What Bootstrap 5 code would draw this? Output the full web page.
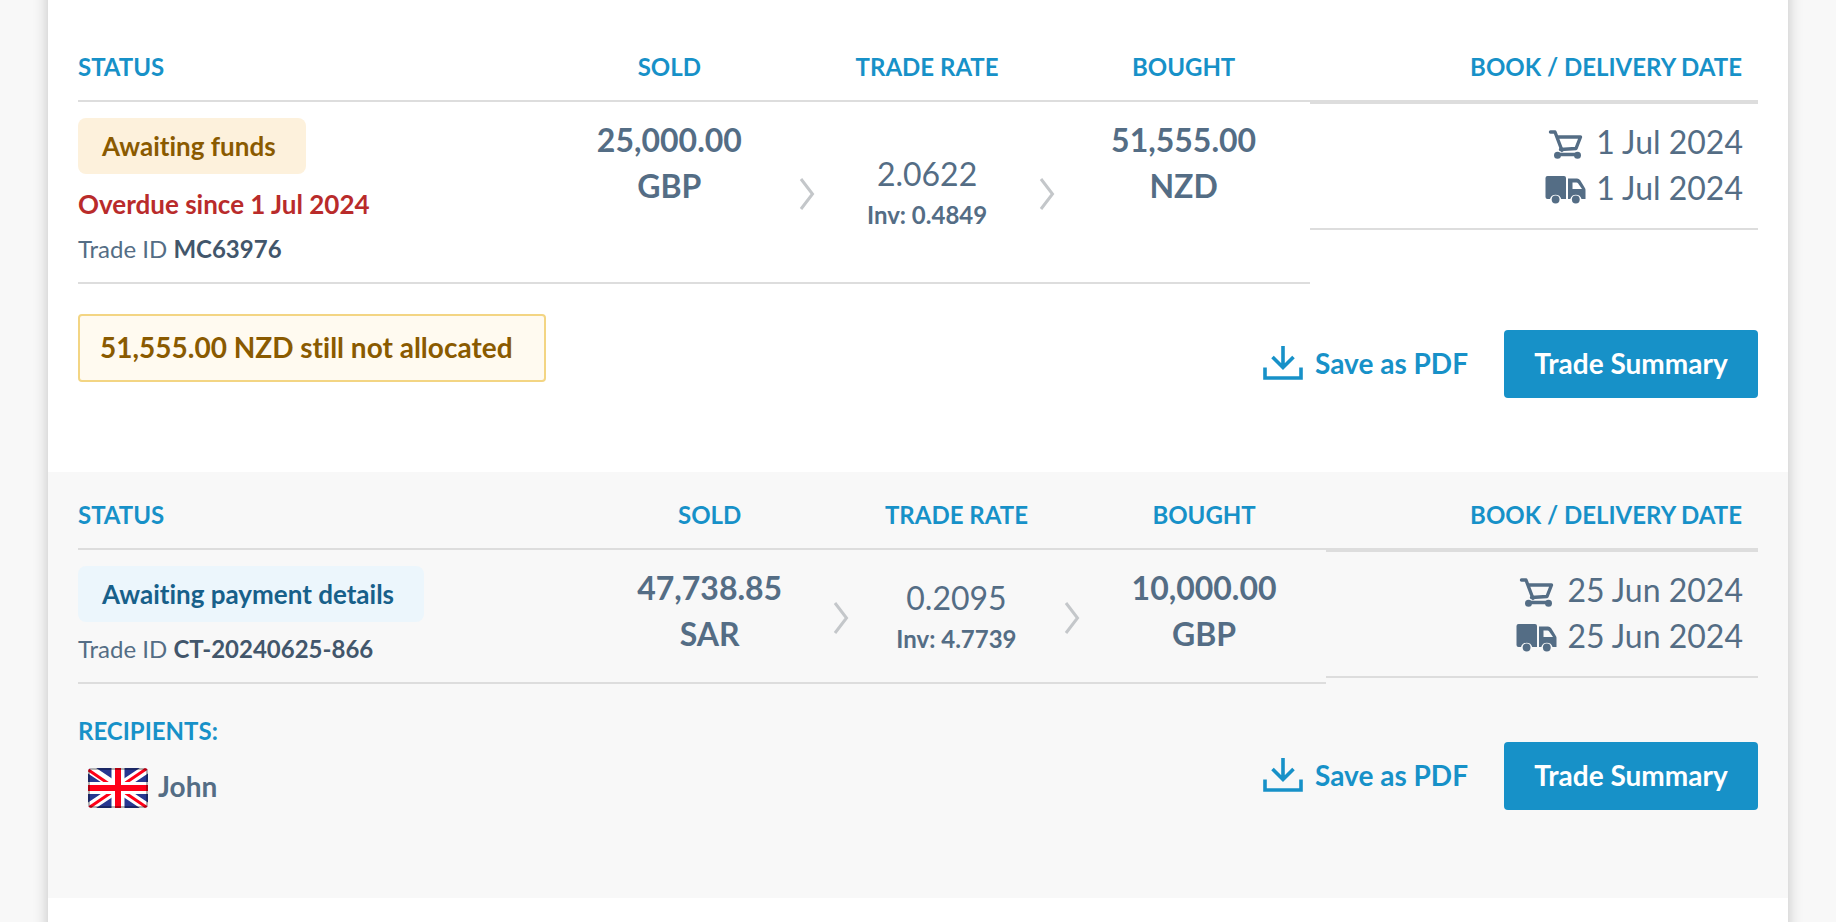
<!DOCTYPE html>
<html lang="en">
<head>
<meta charset="utf-8">
<meta name="viewport" content="width=device-width, initial-scale=1">
<title>Trades</title>
<link href="https://cdn.jsdelivr.net/npm/bootstrap@5.3.0/dist/css/bootstrap.min.css" rel="stylesheet">
<style>
  :root { --brand: #1791c8; --slate: #546d85; --rule: #ddd; }
  body { font-family: Lato, "Liberation Sans", sans-serif; font-size: 28px; line-height: 36px; font-variant-ligatures: none; color: var(--slate); background: #f8f8f8; }
  .sheet { margin: -24px 48px; padding: 24px 0 48px; background: #fff; box-shadow: 0 0 14px rgba(0, 0, 0, .22); }
  .trade { padding: 24px 30px 88px; }
  .trade-first { padding-top: 48px; padding-bottom: 74px; }
  .trade-alt { background: #f8f8f8; }
  .trade-table { width: 100%; table-layout: fixed; border-collapse: separate; border-spacing: 0; }
  .trade-table th { padding: 1px 0 15px; border-bottom: 2px solid var(--rule); font-size: 24px; font-weight: 700; color: var(--brand); text-align: center; white-space: nowrap; }
  .trade-table td { padding: 16px 0 15px; border-bottom: 2px solid var(--rule); vertical-align: top; text-align: center; }
  .trade-table th:first-child, .trade-table td:first-child { text-align: left; }
  .trade-table th:last-child { text-align: right; padding-right: 16px; }
  .trade-table td.dates-cell { padding: 0; border: 0; }
  .trade-table td.amount { padding-top: 15px; }
  .trade-table td.rate, .trade-table td.arrow { padding: 0; vertical-align: middle; }
  .trade-table td.arrow { padding-top: 4px; }
  .c-arrow { width: 20px; }
  .t1 .c-status { width: 27.6%; } .t1 .c-sold { width: 15.2%; } .t1 .c-rate { width: 13.1%; } .t1 .c-bought { width: 15.06%; }
  .t2 .c-status { width: 30.4%; } .t2 .c-sold { width: 14.4%; } .t2 .c-rate { width: 12.6%; } .t2 .c-bought { width: 14.5%; }
  .big { font-size: 32px; line-height: 46px; }
  .inv { font-size: 24px; font-weight: 700; }
  .semi { font-weight: 700; }
  .dates { border-top: 2px solid var(--rule); border-bottom: 2px solid var(--rule); padding: 15px 15px 17px 0; text-align: right; }
  .pill { display: inline-block; padding: 10px 30px 10px 24px; border-radius: 8px; font-size: 26px; font-weight: 700; vertical-align: top; }
  .pill-warn { background: #fdf1dc; color: #8a5a00; }
  .pill-info { background: #ecf6fc; color: #17608a; }
  .overdue { margin-top: 12px; font-size: 26px; font-weight: 700; color: #b92b2b; }
  .trade-id { margin-top: 9px; font-size: 24px; }
  .trade-id strong { font-weight: 700; color: #42566b; }
  .unallocated { min-width: 468px; margin: 30px 0 16px; padding: 13px 20px 15px; border: 2px solid #f3d583; border-radius: 4px; background: #fffaf0; color: #8a5a00; font-weight: 700; }
  .recipients { padding: 29px 0 2px; }
  .recipients h2 { margin: 0 0 19px; font-size: 24px; line-height: 36px; font-weight: 700; color: var(--brand); }
  .recipient { padding-left: 10px; gap: 10px; font-weight: 700; line-height: 32px; }
  .recipient span { padding-bottom: 4px; }
  .save { gap: 12px; color: var(--brand); font-weight: 700; text-decoration: none; padding-bottom: 2px; }
  .btn-summary { min-width: 254px; padding: 15px 26px 17px; border: 0; border-radius: 4px; background: var(--brand); color: #fff; font-size: 28px; line-height: 36px; font-weight: 700; }
  .btn-summary:hover, .btn-summary:focus { background: #127aa9; color: #fff; }
  .actions { gap: 36px; }
  svg { display: block; }
  .big svg { display: inline-block; vertical-align: -7px; margin-right: 10px; }
</style>
</head>
<body>
<svg width="0" height="0" class="position-absolute" aria-hidden="true">
  <symbol id="i-chevron" viewBox="0 0 16 34"><path d="M2 2 13.500 17 2 32" fill="none" stroke="#c4c7ca" stroke-width="3"/></symbol>
  <symbol id="i-cart" viewBox="0 0 42 32"><g fill="none" stroke="currentColor" stroke-width="3.400" stroke-linecap="round" stroke-linejoin="round"><path d="M6.500 3h4.500L18 21.500M13 8h23.500l-4.500 11.500L16.500 20.500M15 25.500h17"/></g><circle cx="13.500" cy="26.200" r="3.500" fill="currentColor"/><circle cx="33.500" cy="26.200" r="3.500" fill="currentColor"/></symbol>
  <symbol id="i-truck" viewBox="0 0 42 32"><path fill="currentColor" fill-rule="evenodd" d="M3.500 1H20q2 0 2 2v21h-4.800a5.800 5.800 0 0 0-11.200 0H3.500q-2 0-2-2V3q0-2 2-2zM24 3.500h9q2 0 3.200 1.800L40 11.500q1.500 2 1.500 4V24h-4a5.800 5.800 0 0 0-11.200 0H24zM28.500 7.500v6.500h9.500L34 8.200q-.5-.7-1.500-.7z"/><circle cx="11.600" cy="24.500" r="3.900" fill="currentColor"/><circle cx="31.800" cy="24.500" r="3.900" fill="currentColor"/></symbol>
  <symbol id="i-save" viewBox="0 0 40 34"><path d="M20 0v21M9.500 11 20 21.500 30.500 11" fill="none" stroke="currentColor" stroke-width="3.600"/><path d="M2 21.500v10.500h36V21.500" fill="none" stroke="currentColor" stroke-width="3.600"/></symbol>
</svg>

<div class="min-vh-100 d-flex flex-column overflow-hidden">
<main class="sheet flex-grow-1">
  <section class="trade trade-first">
    <table class="trade-table t1">
      <colgroup><col class="c-status"><col class="c-sold"><col class="c-arrow"><col class="c-rate"><col class="c-arrow"><col class="c-bought"><col></colgroup>
      <thead><tr><th>STATUS</th><th>SOLD</th><th></th><th>TRADE RATE</th><th></th><th>BOUGHT</th><th>BOOK / DELIVERY DATE</th></tr></thead>
      <tbody><tr>
        <td>
          <span class="pill pill-warn">Awaiting funds</span>
          <div class="overdue">Overdue since 1 Jul 2024</div>
          <div class="trade-id">Trade ID <strong>MC63976</strong></div>
        </td>
        <td class="amount big semi">25,000.00<br>GBP</td>
        <td class="arrow"><svg class="mx-auto" width="16" height="34"><use href="#i-chevron"/></svg></td>
        <td class="rate"><div class="big">2.0622</div><div class="inv">Inv: 0.4849</div></td>
        <td class="arrow"><svg class="mx-auto" width="16" height="34"><use href="#i-chevron"/></svg></td>
        <td class="amount big semi">51,555.00<br>NZD</td>
        <td class="dates-cell"><div class="dates">
          <div class="big"><svg width="42" height="32"><use href="#i-cart"/></svg>1 Jul 2024</div>
          <div class="big"><svg width="42" height="32"><use href="#i-truck"/></svg>1 Jul 2024</div>
        </div></td>
      </tr></tbody>
    </table>
    <div class="d-flex justify-content-between align-items-end">
      <div class="unallocated">51,555.00 NZD still not allocated</div>
      <div class="actions d-flex align-items-center">
        <a href="#" class="save d-flex align-items-center"><svg width="40" height="34"><use href="#i-save"/></svg>Save as PDF</a>
        <button type="button" class="btn btn-summary">Trade Summary</button>
      </div>
    </div>
  </section>

  <section class="trade trade-alt">
    <table class="trade-table t2">
      <colgroup><col class="c-status"><col class="c-sold"><col class="c-arrow"><col class="c-rate"><col class="c-arrow"><col class="c-bought"><col></colgroup>
      <thead><tr><th>STATUS</th><th>SOLD</th><th></th><th>TRADE RATE</th><th></th><th>BOUGHT</th><th>BOOK / DELIVERY DATE</th></tr></thead>
      <tbody><tr>
        <td>
          <span class="pill pill-info">Awaiting payment details</span>
          <div class="trade-id">Trade ID <strong>CT-20240625-866</strong></div>
        </td>
        <td class="amount big semi">47,738.85<br>SAR</td>
        <td class="arrow"><svg class="mx-auto" width="16" height="34"><use href="#i-chevron"/></svg></td>
        <td class="rate"><div class="big">0.2095</div><div class="inv">Inv: 4.7739</div></td>
        <td class="arrow"><svg class="mx-auto" width="16" height="34"><use href="#i-chevron"/></svg></td>
        <td class="amount big semi">10,000.00<br>GBP</td>
        <td class="dates-cell"><div class="dates">
          <div class="big"><svg width="42" height="32"><use href="#i-cart"/></svg>25 Jun 2024</div>
          <div class="big"><svg width="42" height="32"><use href="#i-truck"/></svg>25 Jun 2024</div>
        </div></td>
      </tr></tbody>
    </table>
    <div class="d-flex justify-content-between align-items-end">
      <div class="recipients">
        <h2>RECIPIENTS:</h2>
        <div class="recipient d-flex align-items-center">
          <svg width="60" height="40" viewBox="0 0 60 40" role="img" aria-label="United Kingdom">
            <clipPath id="flag"><rect width="60" height="40" rx="4"/></clipPath>
            <g clip-path="url(#flag)">
              <path fill="#283891" d="M0 0h60v40H0z"/>
              <path stroke="#fff" stroke-width="9" d="M0 0l60 40M60 0L0 40"/>
              <path stroke="#ff0018" stroke-width="3" d="M-1 1l25 17M61-1L36 16M61 41L36 24M-1 41L24 24"/>
              <path stroke="#fff" stroke-width="13" d="M30 0v40"/><path stroke="#fff" stroke-width="12" d="M0 20h60"/>
              <path stroke="#ff0018" stroke-width="6" d="M30 0v40M0 20h60"/>
              <rect x="1" y="1" width="58" height="38" rx="3" fill="none" stroke="#000" stroke-opacity=".3" stroke-width="2"/>
            </g>
          </svg>
          <span>John</span>
        </div>
      </div>
      <div class="actions d-flex align-items-center">
        <a href="#" class="save d-flex align-items-center"><svg width="40" height="34"><use href="#i-save"/></svg>Save as PDF</a>
        <button type="button" class="btn btn-summary">Trade Summary</button>
      </div>
    </div>
  </section>
</main>
</div>
<script src="https://cdn.jsdelivr.net/npm/bootstrap@5.3.0/dist/js/bootstrap.bundle.min.js"></script>
</body>
</html>
